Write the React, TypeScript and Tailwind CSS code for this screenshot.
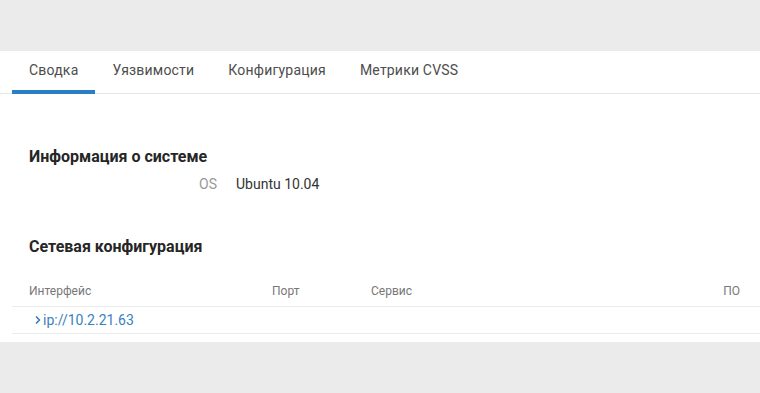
import { ChevronRight } from "lucide-react"

const tabs = ["Сводка", "Уязвимости", "Конфигурация", "Метрики CVSS"]

export default function App() {
  return (
    <div className="min-h-[393px] w-[760px] bg-[#ebebeb] pt-[51px] pb-[51px] font-['Roboto',sans-serif]">
      <div className="bg-white h-[291px]">
        {/* Tabs */}
        <div className="flex border-b border-[#e6e6e6] pl-3 h-[43px]">
          {tabs.map((t, i) => (
            <div
              key={t}
              className={`flex items-center px-[17px] text-[14px] tracking-[0.2px] text-[#4d4d4d] border-b-4 ${
                i === 0 ? "border-[#2a7fc4]" : "border-transparent"
              } -mb-px`}
            >
              {t}
            </div>
          ))}
        </div>

        {/* System info */}
        <div className="pl-[29px] pt-[53px]">
          <h2 className="text-[16px] font-bold text-[#262626] leading-5">Информация о системе</h2>
          <div className="flex mt-[7px] text-[14px] leading-5">
            <span className="w-[188px] text-right text-[#999]">OS</span>
            <span className="ml-[19px] text-[#333]">Ubuntu 10.04</span>
          </div>
        </div>

        <div className="pl-[29px] pt-[43px]">
          <h2 className="text-[16px] font-bold text-[#262626] leading-5">Сетевая конфигурация</h2>
        </div>

        {/* Table */}
        <div className="ml-3 mt-[18px] text-[12px]">
          <div className="flex items-center h-[32px] border-b border-[#ebebeb] text-[#777]">
            <div className="w-[260px] pl-[17px]">Интерфейс</div>
            <div className="w-[99px]">Порт</div>
            <div className="flex-1">Сервис</div>
            <div className="pr-5">ПО</div>
          </div>
          <div className="flex items-center h-[27px] border-b border-[#ebebeb] text-[14px] text-[#3a7fc1]">
            <div className="flex items-center pl-[20px]">
              <ChevronRight className="w-3 h-3 -mr-px" strokeWidth={3.5} />
              <span>ip://10.2.21.63</span>
            </div>
          </div>
        </div>
      </div>
    </div>
  )
}
